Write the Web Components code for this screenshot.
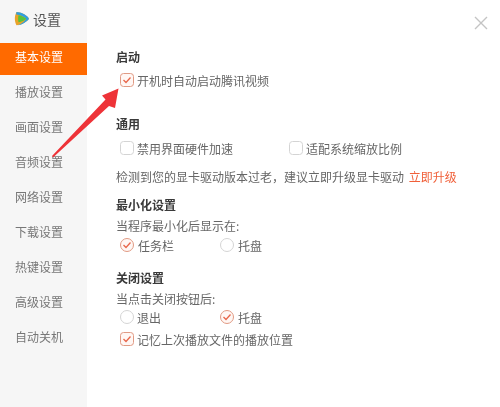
<!DOCTYPE html>
<html>
<head>
<meta charset="utf-8">
<title>设置</title>
<style>
  html, body { margin: 0; background: #fff; }
  body { font: 12px "Noto Sans CJK SC", "Liberation Sans", sans-serif; color: #666; }
</style>
</head>
<body>
<settings-window>
  <side-nav slot="nav">
    <nav-item active>基本设置</nav-item>
    <nav-item>播放设置</nav-item>
    <nav-item>画面设置</nav-item>
    <nav-item>音频设置</nav-item>
    <nav-item>网络设置</nav-item>
    <nav-item>下载设置</nav-item>
    <nav-item>热键设置</nav-item>
    <nav-item>高级设置</nav-item>
    <nav-item>自动关机</nav-item>
  </side-nav>

  <settings-section heading="启动" style="margin-top:48px">
    <option-row style="margin-top:-1px"><check-option checked>开机时自动启动腾讯视频</check-option></option-row>
  </settings-section>

  <settings-section heading="通用" style="margin-top:26px">
    <option-row columns="169px auto">
      <check-option>禁用界面硬件加速</check-option>
      <check-option>适配系统缩放比例</check-option>
    </option-row>
    <hint-line style="margin-top:11px">检测到您的显卡驱动版本过老，建议立即升级显卡驱动 <a>立即升级</a></hint-line>
  </settings-section>

  <settings-section heading="最小化设置" style="margin-top:10px" tight>
    <hint-line>当程序最小化后显示在:</hint-line>
    <option-row columns="100px auto" style="margin-top:1px">
      <check-option type="radio" checked>任务栏</check-option>
      <check-option type="radio">托盘</check-option>
    </option-row>
  </settings-section>

  <settings-section heading="关闭设置" style="margin-top:15px" tight>
    <hint-line style="margin-top:1px">当点击关闭按钮后:</hint-line>
    <option-row columns="100px auto">
      <check-option type="radio" narrow>退出</check-option>
      <check-option type="radio" checked>托盘</check-option>
    </option-row>
    <option-row style="margin-top:4px"><check-option checked>记忆上次播放文件的播放位置</check-option></option-row>
  </settings-section>
</settings-window>

<script>
class SettingsWindow extends HTMLElement {
  connectedCallback () {
    this.attachShadow({ mode: 'open' }).innerHTML = `
    <style>
      :host { display: flex; position: relative; height: 407px; width: 500px; overflow: hidden; background: #fff; }
      main { flex: 1; padding-left: 29px; filter: blur(.4px); }
      .close { position: absolute; left: 474px; top: 16px; }
      .arrow { position: absolute; left: 0; top: 0; pointer-events: none; filter: blur(.4px); }
    </style>
    <slot name="nav"></slot>
    <main><slot></slot></main>
    <svg class="close" width="14" height="14" viewBox="0 0 14 14"><path d="M1 1 13 13M13 1 1 13" stroke="#c4c4c4" stroke-width="1.4" fill="none"/></svg>
    <svg class="arrow" width="500" height="407" viewBox="0 0 500 407"><path d="M118.500 88.500 102 95.500 105.500 99.500 52 156 53 157.500 109 106 115 108Z" fill="#ee3338"/></svg>
    `;
  }
}

class SideNav extends HTMLElement {
  connectedCallback () {
    this.attachShadow({ mode: 'open' }).innerHTML = `
    <style>
      :host { display: block; width: 87px; flex: none; background: #f6f6f6; }
      header { display: flex; align-items: center; height: 40px; padding: 0 0 3px 14px; box-sizing: border-box; gap: 4px; font-size: 14px; color: #555; filter: blur(.3px); }
    </style>
    <header>
      <svg width="15" height="15" viewBox="0 0 15 15">
        <path d="M2.500 1C7 1 12 4 14 6.200 15.200 7.500 15 8.200 14 9 11.500 11.500 7 14.200 2.500 14.200 0.300 10 0.300 5.500 2.500 1Z" fill="#e8a32a"/>
        <path d="M2.500 1C7 1 12 4 14 6.200 15.200 7.500 15 8.200 14 9 11.500 11.500 7 14.200 4 14.200 9 12 11.500 9.500 12 7.600 9 5.500 6 3.800 2.200 3.500Z" fill="#2f9fe0"/>
        <path d="M4.500 4.200C7.500 4.800 10.500 6.300 12.300 7.700 10.300 9.500 7.800 10.800 4.500 11.300 4 9 4 6.500 4.500 4.200Z" fill="#56c43a"/>
      </svg>
      <span>设置</span>
    </header>
    <slot></slot>
    `;
  }
}

class NavItem extends HTMLElement {
  connectedCallback () {
    this.attachShadow({ mode: 'open' }).innerHTML = `
    <style>
      :host { display: flex; align-items: center; box-sizing: border-box; height: 32px; margin-top: 3px; padding: 0 0 5px 15px; color: #777; }
      :host([active]) { background: #ff6a00; color: #fff; }
      span { filter: blur(.4px); }
    </style>
    <span><slot></slot></span>
    `;
  }
}

class SettingsSection extends HTMLElement {
  connectedCallback () {
    this.attachShadow({ mode: 'open' }).innerHTML = `
    <style>
      :host { display: block; }
      h2 { margin: 0 0 6px; font-size: 12px; line-height: 18px; font-weight: 700; color: #3a3a3a; }
      :host([tight]) h2 { margin-bottom: 3px; }
    </style>
    <h2>${this.getAttribute('heading')}</h2>
    <slot></slot>
    `;
  }
}

class OptionRow extends HTMLElement {
  connectedCallback () {
    const cols = this.getAttribute('columns') || 'auto';
    this.attachShadow({ mode: 'open' }).innerHTML = `
    <style>
      :host { display: grid; grid-template-columns: ${cols}; justify-content: start; height: 18px; padding-left: 4px; }
    </style>
    <slot></slot>
    `;
  }
}

class HintLine extends HTMLElement {
  connectedCallback () {
    this.attachShadow({ mode: 'open' }).innerHTML = `
    <style>
      :host { display: block; line-height: 18px; white-space: nowrap; }
      ::slotted(a) { color: #f0603a; margin-left: 2px; }
    </style>
    <slot></slot>
    `;
  }
}

class CheckOption extends HTMLElement {
  connectedCallback () {
    const radio = this.getAttribute('type') === 'radio';
    const checked = this.hasAttribute('checked');
    const mark = checked ? '<path d="M3.500 7 6 9.500 10.500 4.500" stroke="#e8664a" stroke-width="1.300" fill="none"/>' : '';
    const stroke = checked ? '#e09a84' : '#d4d4d4';
    const fill = checked ? '#fff7f4' : '#fff';
    const shape = radio
      ? `<circle cx="7" cy="7" r="6.500" fill="${fill}" stroke="${stroke}"/>`
      : `<rect x="0.500" y="0.500" width="13" height="13" rx="3" fill="${fill}" stroke="${stroke}"/>`;
    const gap = this.hasAttribute('narrow') ? 3 : radio ? 4 : 3;
    this.attachShadow({ mode: 'open' }).innerHTML = `
    <style>
      :host { display: inline-flex; align-items: center; gap: ${gap}px; height: 18px; white-space: nowrap; }
      svg { flex: none; }
    </style>
    <svg width="14" height="14" viewBox="0 0 14 14">${shape}${mark}</svg>
    <slot></slot>
    `;
  }
}

customElements.define('settings-window', SettingsWindow);
customElements.define('side-nav', SideNav);
customElements.define('nav-item', NavItem);
customElements.define('settings-section', SettingsSection);
customElements.define('option-row', OptionRow);
customElements.define('hint-line', HintLine);
customElements.define('check-option', CheckOption);
</script>
</body>
</html>
